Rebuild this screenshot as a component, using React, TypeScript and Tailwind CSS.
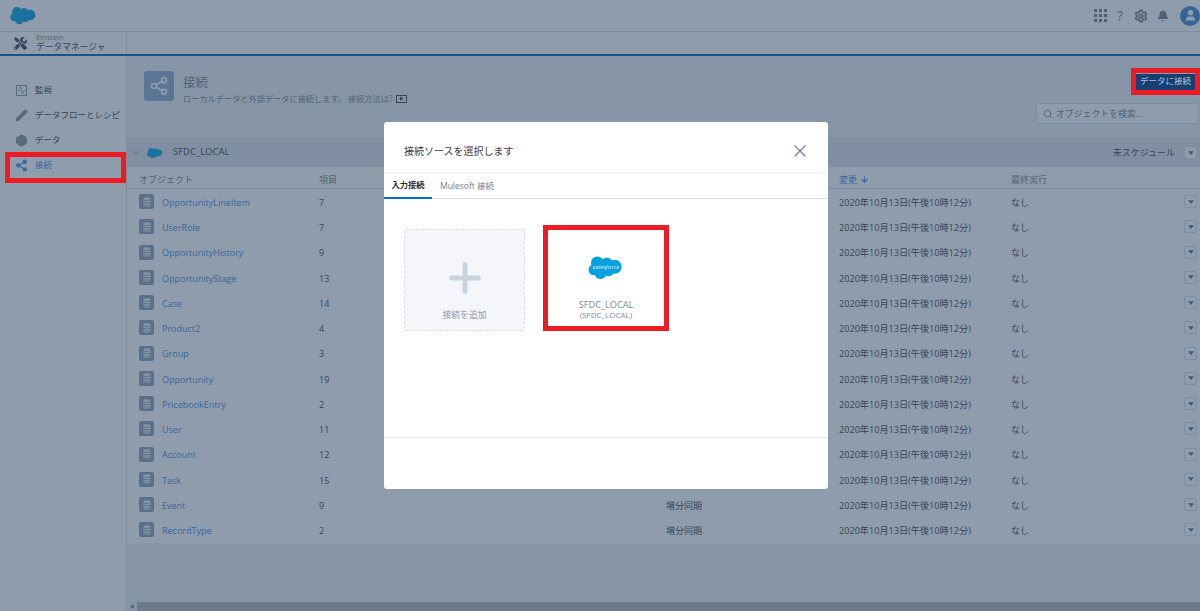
import { X, Plus, ChevronDown, Search, ArrowDown, Pencil, Hexagon, Activity, Settings, Bell, User, Share2, Play } from "lucide-react";
import { FaTools } from "react-icons/fa";

const font = { fontFamily: '"Open Sans", "Noto Sans CJK JP", sans-serif' };

const rows = [
  { name: "OpportunityLineItem", count: 7, mode: "" },
  { name: "UserRole", count: 7, mode: "" },
  { name: "OpportunityHistory", count: 9, mode: "" },
  { name: "OpportunityStage", count: 13, mode: "" },
  { name: "Case", count: 14, mode: "" },
  { name: "Product2", count: 4, mode: "" },
  { name: "Group", count: 3, mode: "" },
  { name: "Opportunity", count: 19, mode: "" },
  { name: "PricebookEntry", count: 2, mode: "" },
  { name: "User", count: 11, mode: "" },
  { name: "Account", count: 12, mode: "" },
  { name: "Task", count: 15, mode: "" },
  { name: "Event", count: 9, mode: "増分同期" },
  { name: "RecordType", count: 2, mode: "増分同期" },
];

const CLOUD =
  "M41 13c3-3 7-5 12-5 6 0 11 3 14 8 2-1 5-2 8-2 11 0 20 9 20 20s-9 20-20 20c-1 0-3 0-4-1-2 5-8 8-14 8-3 0-5-1-7-2-3 6-9 10-16 10-7 0-14-5-16-11-1 0-2 0-3 0-9 0-15-7-15-15 0-6 3-11 8-14-1-2-1-4-1-7 0-10 8-18 18-18 6 0 12 3 16 9z";

function Cloud({ className, label }: { className: string; label?: boolean }) {
  return (
    <svg viewBox="0 0 100 72" className={className}>
      <path d={CLOUD} fill="#00a1e0" />
      {label && (
        <text x="50" y="41" textAnchor="middle" fontSize="15" textLength="76" fill="#fff" fontStyle="italic">
          salesforce
        </text>
      )}
    </svg>
  );
}

function MenuButton() {
  return (
    <div className="flex h-[13px] w-[13px] items-center justify-center rounded-[2px] border border-[#d8dde6] bg-white">
      <svg viewBox="0 0 8 5" className="h-[4px] w-[6px]">
        <path d="M0 0h8L4 5z" fill="#54698d" />
      </svg>
    </div>
  );
}

function DbIcon() {
  return (
    <div className="flex h-[15px] w-[15px] items-center justify-center rounded-[2px] bg-[#8d9cb5]">
      <svg viewBox="0 0 10 12" className="h-[10px] w-[8px]" fill="#e8edf3">
        <ellipse cx="5" cy="1.8" rx="4.5" ry="1.8" />
        <path d="M.5 3.6c1 1.4 8 1.4 9 0v1.8c-1 1.5-8 1.5-9 0zM.5 6.6c1 1.4 8 1.4 9 0v1.8c-1 1.5-8 1.5-9 0zM.5 9.4c1 1.4 8 1.4 9 0v.8c-1 2.4-8 2.4-9 0z" />
      </svg>
    </div>
  );
}

function SideItem({ icon, label, active }: { icon: React.ReactNode; label: string; active?: boolean }) {
  return (
    <div className={`flex h-[25px] items-center gap-[8px] whitespace-nowrap pl-[16px] text-[8.5px] ${active ? "text-[#3f8ae8]" : "text-[#3a3f48]"}`}>
      <span className="flex w-[11px] justify-center">{icon}</span>
      <span>{label}</span>
    </div>
  );
}

export default function App() {
  return (
    <div className="relative h-[611px] w-[1200px] overflow-hidden bg-white text-[#3a3f48]" style={font}>
      {/* top bar */}
      <div className="flex h-[32px] items-center justify-between border-b border-[#d8dde6] pl-[10px]">
        <Cloud className="h-[19px] w-[27px]" />
        <div className="flex items-center text-[#767a80]">
          <div className="grid grid-cols-3 gap-[2px]">
            {Array.from({ length: 9 }).map((_, i) => (
              <span key={i} className="h-[3px] w-[3px] bg-[#767a80]" />
            ))}
          </div>
          <span className="ml-[10px] w-[7px] text-[14px] leading-none">?</span>
          <Settings size={14} strokeWidth={3} className="ml-[10px]" />
          <Bell size={12} fill="#767a80" className="ml-[9px]" />
          <div className="ml-[11px] flex h-[20px] w-[20px] items-center justify-center rounded-full bg-[#3e83d1]">
            <User size={13} fill="#fff" stroke="#fff" />
          </div>
        </div>
      </div>

      {/* app bar */}
      <div className="flex h-[24px] border-b-2 border-[#0b5cab]">
        <div className="flex w-[127px] items-center gap-[9px] border-r border-[#d8dde6] pl-[14px]">
          <FaTools size={13} className="text-[#3a3f48]" />
          <div className="whitespace-nowrap">
            <div className="text-[7.5px] leading-[9px] text-[#7a8088]">Einstein</div>
            <div className="text-[8.75px] leading-[11px]">データマネージャ</div>
          </div>
        </div>
      </div>

      <div className="flex h-[555px]">
        {/* sidebar */}
        <div className="w-[127px] shrink-0 border-r border-[#d8dde6] bg-white pt-[22px]">
          <SideItem icon={<Activity size={11} className="border border-[#8c929c] text-[#8c929c]" />} label="監視" />
          <SideItem icon={<Pencil size={13} fill="#8c929c" className="shrink-0 text-[#8c929c]" />} label="データフローとレシピ" />
          <SideItem icon={<Hexagon size={13} fill="#8c929c" className="shrink-0 text-[#8c929c]" />} label="データ" />
          <SideItem active icon={<Share2 size={13} fill="#3f8ae8" className="shrink-0" />} label="接続" />
        </div>

        {/* main */}
        <div className="flex min-w-0 flex-1 flex-col bg-[#eef2f4]">
          <div className="flex h-[81px] justify-between pl-[17px] pr-[1px] pt-[15px]">
            <div className="flex gap-[9px]">
              <div className="flex h-[30px] w-[30px] items-center justify-center rounded-[3px] bg-[#8ea9d1]">
                <Share2 size={20} className="text-white" />
              </div>
              <div className="pt-[4px]">
                <div className="text-[12.5px] leading-[16px] text-[#7a8088]">接続</div>
                <div className="mt-[2px] flex items-center gap-[3px] text-[8.2px] leading-[11px] text-[#7a8088]">
                  ローカルデータと外部データに接続します。 接続方法は?
                  <span className="flex h-[8px] w-[11px] items-center justify-center border border-[#3a3f48]">
                    <Play size={5} fill="#3a3f48" />
                  </span>
                </div>
              </div>
            </div>
            <div className="flex flex-col items-end pt-[32px]">
              <div className="flex h-[21px] w-[163px] items-center gap-[3px] rounded-[2px] border border-[#d8dde6] bg-white pl-[6px] text-[8.9px] text-[#7a8088]">
                <Search size={10} />
                オブジェクトを検索...
              </div>
            </div>
          </div>

          <div className="flex h-[30px] items-center justify-between bg-[#e0e5ea] pl-[3px] pr-[3px] pt-[1px]">
            <div className="flex items-center gap-[5px]">
              <ChevronDown size={12} className="text-[#7a8088]" />
              <Cloud className="h-[12px] w-[16px]" />
              <span className="ml-[5px] text-[9.5px]">SFDC_LOCAL</span>
            </div>
            <div className="flex items-center gap-[9px] text-[9px]">
              未スケジュール
              <MenuButton />
            </div>
          </div>

          <div className="grid h-[22px] grid-cols-[180px_347px_173px_172px_173px_1fr] items-center border-b border-[#d8dde6] bg-white pl-[12px] pt-[4px] text-[9px] text-[#7a8088]">
            <span>オブジェクト</span>
            <span>項目</span>
            <span />
            <span className="flex items-center gap-[3px] text-[#3f8ae8]">
              変更 <ArrowDown size={9} strokeWidth={3} />
            </span>
            <span>最終実行</span>
            <span />
          </div>

          <div className="bg-white">
            {rows.map((r) => (
              <div key={r.name} className="grid h-[25.25px] grid-cols-[180px_347px_173px_172px_173px_1fr] items-center pl-[12px] text-[9px]">
                <span className="flex items-center gap-[8px]">
                  <DbIcon />
                  <span className="pt-[2px] text-[#3f8ae8]">{r.name}</span>
                </span>
                <span className="pt-[2px]">{r.count}</span>
                <span className="pt-[2px]">{r.mode}</span>
                <span className="pt-[2px] text-[9.15px]">2020年10月13日(午後10時12分)</span>
                <span className="pt-[2px]">なし</span>
                <MenuButton />
              </div>
            ))}
          </div>

          <div className="flex-1" />
          <div className="flex h-[9px] items-center">
            <span className="w-[10px] text-center text-[5px] text-[#7a8088]">◀</span>
            <div className="h-[9px] flex-1 bg-[#b4b6b4]" />
          </div>
        </div>
      </div>

      {/* dim layer */}
      <div className="absolute inset-0 bg-[#314b66]/55" />

      {/* annotations on the page */}
      <div className="absolute left-[5px] top-[152px] h-[31px] w-[121px] border-[5px] border-[#ed1c24]" />
      <div className="absolute left-[1131px] top-[68px] h-[27px] w-[69px] border-[5px] border-[#ed1c24]">
        <div className="flex h-full items-center justify-center bg-[#8d9bab]">
          <div className="flex h-[16px] w-[59px] items-center justify-center bg-[#173f74] text-[8.5px] text-[#b5c2d2]">データに接続</div>
        </div>
      </div>

      {/* modal */}
      <div className="absolute left-[384px] top-[122px] flex h-[367px] w-[444px] flex-col rounded-[3px] bg-white">
        <div className="flex h-[52px] items-center justify-between border-b-2 border-[#f4f6f9] pl-[20px] pr-[18px] pt-[8px]">
          <span className="text-[10px] text-[#3e3e4c]">接続ソースを選択します</span>
          <X size={20} strokeWidth={1.5} className="text-[#6b84a3]" />
        </div>
        <div className="flex h-[25px] items-stretch border-b border-[#d8dde6]">
          <div className="-mb-px flex w-[48px] items-center justify-center border-b-2 border-[#0070d2] text-[8.25px] font-semibold text-[#2b2b33]">入力接続</div>
          <div className="flex items-center pl-[8px] text-[8.5px] text-[#777c85]">Mulesoft 接続</div>
        </div>
        <div className="flex flex-1 items-start gap-[18px] pl-[20px] pt-[30px]">
          <div className="flex h-[102px] w-[121px] flex-col items-center rounded-[2px] border border-dashed border-[#d8dde6] bg-[#f4f6f9]">
            <Plus size={46} strokeWidth={2.6} className="mt-[25px] text-[#c9d3df]" />
            <span className="mt-[8px] text-[8.8px] text-[#8a9ab0]">接続を追加</span>
          </div>
          <div className="-mt-[4px] flex h-[106px] w-[126px] flex-col items-center border-[5px] border-[#ed1c24] bg-white">
            <Cloud className="mt-[25px] h-[25px] w-[36px]" label />
            <span className="mt-[19px] text-[9.2px] leading-[11px] text-[#7d8b9e]">SFDC_LOCAL</span>
            <span className="text-[8px] leading-[10px] text-[#7d8b9e]">(SFDC_LOCAL)</span>
          </div>
        </div>
        <div className="h-[52px] border-t border-[#e6e9ee]" />
      </div>
    </div>
  );
}
